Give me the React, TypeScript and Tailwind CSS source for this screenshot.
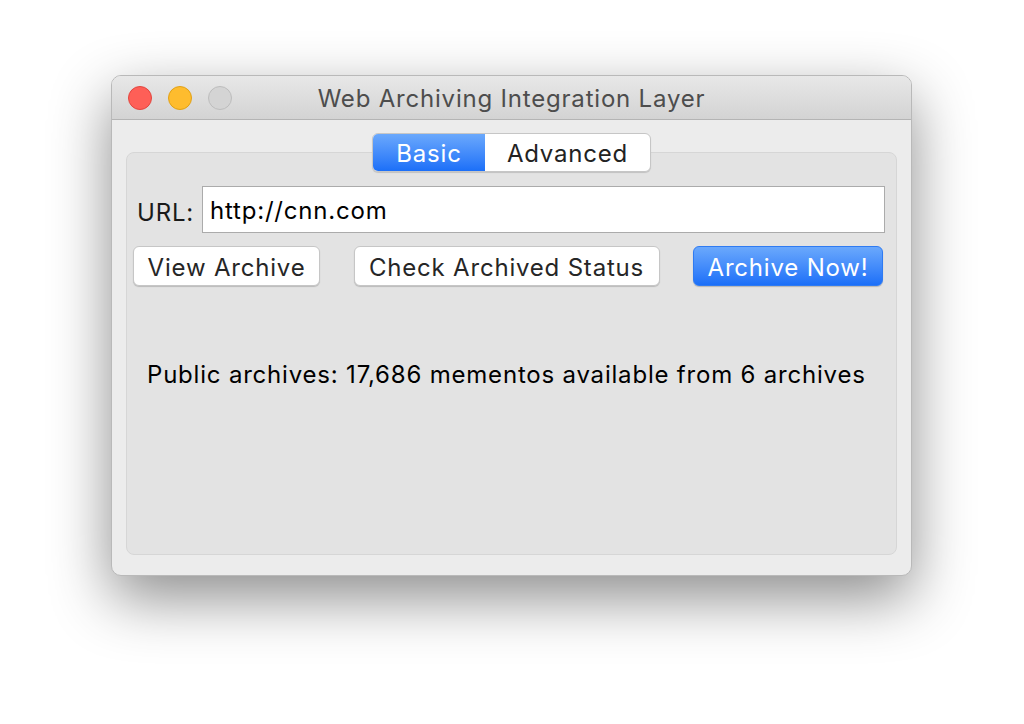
import React from 'react';

const font = { fontFamily: 'Inter, "Liberation Sans", Arial, sans-serif', letterSpacing: '0.8px' };

const TrafficLights = () => (
  <div className="w-[120px] flex items-center gap-[16px] pl-[16px]">
    <span className="w-[24px] h-[24px] rounded-full bg-[#fe5f57] border border-[#e2463f]" />
    <span className="w-[24px] h-[24px] rounded-full bg-[#febc2e] border border-[#e1a116]" />
    <span className="w-[24px] h-[24px] rounded-full bg-[#d4d4d4] border border-[#bdbdbd]" />
  </div>
);

const PushButton = ({ label, primary, width }: { label: string; primary?: boolean; width: string }) => (
  <button
    className={
      primary
        ? `${width} h-[40px] pt-[3px] rounded-[6px] bg-gradient-to-b from-[#6aa8fc] to-[#1b6ff8] border border-[#2f7bf2] text-white text-[24px] leading-none shadow-[0_1px_1px_rgba(0,0,0,0.2)]`
        : `${width} h-[40px] pt-[3px] rounded-[6px] bg-white border border-[#c6c6c6] text-[#262626] text-[24px] leading-none shadow-[0_1px_1px_rgba(0,0,0,0.18)]`
    }
  >
    {label}
  </button>
);

export default function App() {
  return (
    <div className="w-[1024px] h-[724px] bg-white pt-[75px] pl-[111px] overflow-hidden" style={font}>
      <div className="w-[801px] h-[501px] rounded-[10px] bg-[#ececec] border border-[#b9b9b9] shadow-[0_22px_60px_rgba(0,0,0,0.45)] flex flex-col overflow-hidden">
        {/* title bar */}
        <div className="h-[44px] shrink-0 flex items-center bg-gradient-to-b from-[#e8e8e8] to-[#d3d3d3] border-b border-[#b4b4b4]">
          <TrafficLights />
          <div className="flex-1 text-center text-[24px] text-[#4d4d4d] pt-[3px]">
            Web Archiving Integration Layer
          </div>
          <div className="w-[120px]" />
        </div>

        {/* body */}
        <div className="flex-1 flex flex-col px-[14px] pt-[32px] pb-[20px]">
          <div className="flex-1 flex flex-col rounded-[8px] bg-[#e3e3e3] border border-[#d6d6d6]">
            {/* tabs */}
            <div className="self-center -mt-[20px] flex h-[39px] rounded-[6px] border border-[#c6c6c6] bg-white shadow-[0_1px_1px_rgba(0,0,0,0.15)] overflow-hidden text-[24px]">
              <div className="w-[112px] flex items-center justify-center pt-[2px] text-white bg-gradient-to-b from-[#6aa8fc] to-[#1b6ff8]">
                Basic
              </div>
              <div className="w-[165px] flex items-center justify-center pt-[2px] text-[#222]">Advanced</div>
            </div>

            {/* url row */}
            <div className="flex items-center mt-[14px] pl-[10px] pr-[11px]">
              <span className="text-[24px] text-[#1a1a1a] mr-[8px] mt-[6px]">URL:</span>
              <div className="flex-1 h-[47px] bg-white border border-[#ababab] flex items-center pl-[7px] pt-[2px] text-[24px] text-black">
                http://cnn.com
              </div>
            </div>

            {/* buttons */}
            <div className="flex justify-between mt-[13px] pl-[6px] pr-[13px]">
              <PushButton label="View Archive" width="w-[187px]" />
              <PushButton label="Check Archived Status" width="w-[306px]" />
              <PushButton label="Archive Now!" primary width="w-[190px]" />
            </div>

            {/* status */}
            <div className="mt-[71px] pl-[20px] text-[24px] text-black">
              Public archives: 17,686 mementos available from 6 archives
            </div>
          </div>
        </div>
      </div>
    </div>
  );
}
